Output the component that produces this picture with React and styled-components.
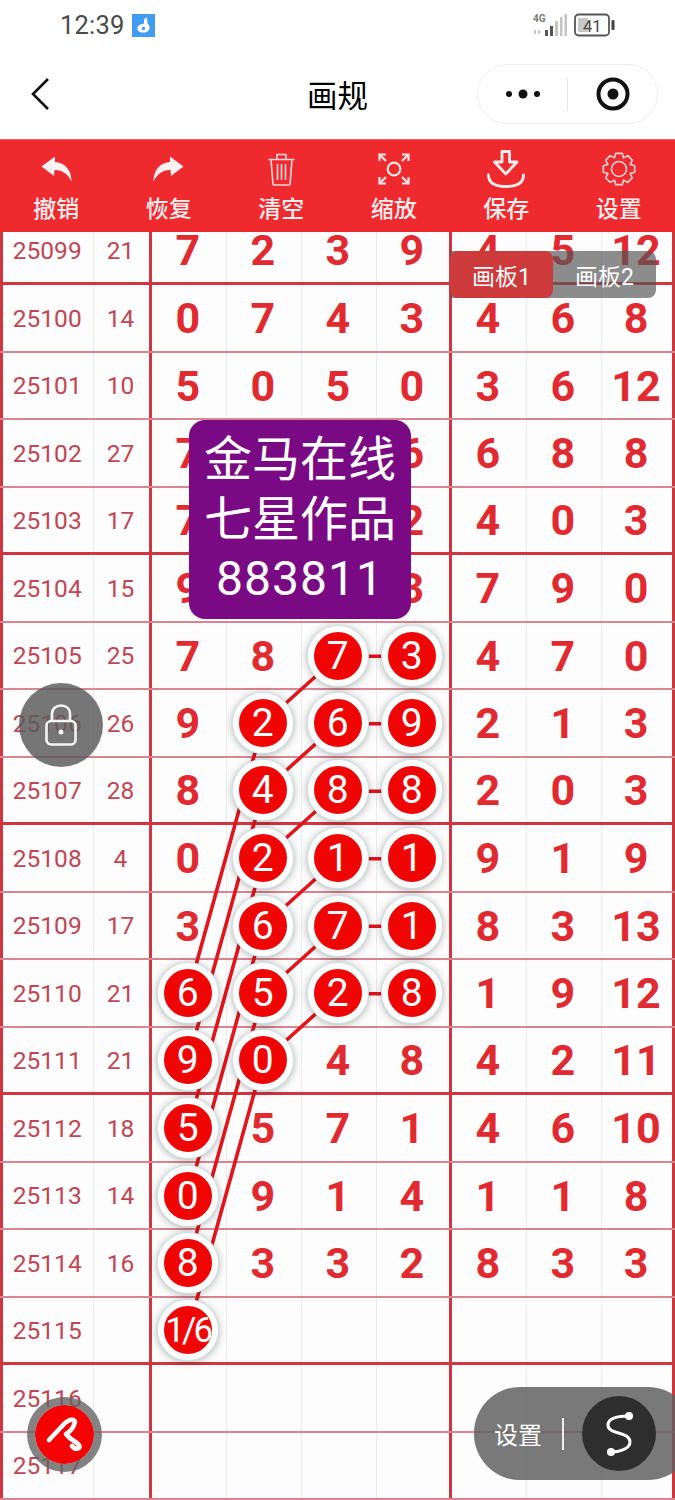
import React from "react";
import styled, { createGlobalStyle } from "styled-components";

const Global = createGlobalStyle`
  html, body { margin: 0; padding: 0; background: #fff; }
  * { box-sizing: border-box; }
  body { font-family: Roboto, "Noto Sans CJK SC", sans-serif; }
`;

const Page = styled.div`
  width: 675px; height: 1500px; overflow: hidden; position: relative;
  display: flex; flex-direction: column; background: #fff;
`;
const StatusBar = styled.div`
  height: 50px; display: flex; align-items: center; justify-content: space-between;
  padding: 0 60px 0 60px; flex: none;
`;
const StatusLeft = styled.div`display: flex; align-items: center; gap: 7px;`;
const Clock = styled.span`font-size: 25.5px; color: #4a4a4a; letter-spacing: .2px;`;
const StatusRight = styled.div`display: flex; align-items: center; gap: 7px;`;
const NavBar = styled.div`
  height: 89px; flex: none; position: relative; display: flex; align-items: center;
  justify-content: center;
`;
const BackBtn = styled.svg`position: absolute; left: 30px; top: 28px;`;
const Title = styled.div`font-size: 30.5px; color: #000; font-weight: 400; transform: translateY(-1px);`;
const Capsule = styled.div`
  position: absolute; left: 477px; top: 14px; width: 181px; height: 60px;
  border: 1px solid #efefef; border-radius: 30px; display: flex; align-items: center;
`;
const CapsuleHalf = styled.div`flex: 1; height: 100%; display: flex; align-items: center; justify-content: center;`;
const CapsuleDivider = styled.div`width: 1px; height: 34px; background: #e8e8e8;`;
const Toolbar = styled.div`
  height: 93px; flex: none; background: #ef2a2e; display: grid;
  grid-template-columns: repeat(6, 1fr); border-top: 1px solid #f65a5c;
`;
const Tool = styled.div`
  display: flex; flex-direction: column; align-items: center; color: #fdeeee; position: relative;
`;
const ToolIcon = styled.div`height: 42px; margin-top: 8px; display: flex; align-items: center; justify-content: center;`;
const ToolLabel = styled.div`font-size: 23px; font-weight: 500; line-height: 30px; margin-top: 5px;`;

const Board = styled.div`flex: 1; position: relative; overflow: hidden; background: #fdfdfd;`;
const Rows = styled.div`margin-top: -14.5px;`;
const Row = styled.div`
  height: 67.5px; display: grid;
  grid-template-columns: 94px 57.5px 75px 75px 75px 75px 75px 75px 73.5px;
  border-bottom: ${p => (p.$thick ? "3px solid #d1353f" : "2px solid #d9848f")};
`;
const Cell = styled.div`
  display: flex; align-items: center; justify-content: center; position: relative;
  border-right: ${p => (p.$heavy ? "3px solid #d1353f" : "1.5px solid #ebebeb")};
  border-left: ${p => (p.$first ? "3px solid #d1353f" : "none")};
  color: ${p => (p.$small ? "#c04653" : "#e12a30")};
  font-size: ${p => (p.$small ? "24.5px" : "43px")};
  font-weight: ${p => (p.$small ? 400 : 700)};
  padding: 1px 1.5px 0 0;
`;
const Ball = styled.div`
  position: relative; z-index: 3; flex: none; width: 60px; height: 60px; border-radius: 50%;
  background: #f00505; border: 6px solid #fff; color: #fff;
  font-size: ${p => (p.$tiny ? "35px" : "39px")};
  letter-spacing: ${p => (p.$tiny ? "-3px" : "0")};
  font-weight: 400;
  display: flex; align-items: center; justify-content: center; overflow: hidden;
  box-shadow: 0 0 0 1px #cfe3e6, 0 1px 8px rgba(0,0,0,.38);
`;
const Lines = styled.svg`position: absolute; left: 0; top: 0; z-index: 2; pointer-events: none;`;

const Tabs = styled.div`
  position: absolute; z-index: 5; left: 450px; top: 19px; display: flex; width: 206px; height: 47px;
  background: rgba(85,85,85,.68); border-radius: 0 8px 8px 0;
`;
const Tab = styled.div`
  width: 103px; display: flex; align-items: center; justify-content: center; font-size: 23px;
  color: #fff; border-radius: 8px; background: ${p => (p.$on ? "#cc3a3c" : "transparent")};
`;
const Popup = styled.div`
  position: absolute; z-index: 6; left: 189px; top: 188px; width: 222px; height: 199px;
  background: #7a0a84; border-radius: 16px; color: #fff; font-size: 48px; line-height: 59.5px;
  text-align: center; padding-top: 10px;
`;
const PopupCode = styled.span`letter-spacing: 1px;`;
const LockBtn = styled.div`
  position: absolute; z-index: 6; left: 19px; top: 451px; width: 84px; height: 84px; border-radius: 50%;
  background: rgba(92,92,92,.84); display: flex; align-items: center; justify-content: center;
`;
const PenBtn = styled.div`
  position: absolute; z-index: 6; left: 27px; top: 1165px; width: 75px; height: 75px; border-radius: 50%;
  background: #f50303; background-clip: padding-box; border: 8px solid rgba(100,100,100,.8);
  display: flex; align-items: center; justify-content: center;
`;
const Pill = styled.div`
  position: absolute; z-index: 6; left: 474px; top: 1155px; width: 220px; height: 93px;
  border-radius: 46px; background: rgba(95,95,95,.84); color: #fff;
  display: flex; align-items: center; padding-left: 20px;
`;
const PillText = styled.div`font-size: 24px;`;
const PillLine = styled.div`width: 1.5px; height: 32px; background: #eee; margin-left: 20px;`;
const PillKnob = styled.div`
  width: 74px; height: 75px; border-radius: 50%; background: #2e2e2e; margin-left: 18.5px;
  display: flex; align-items: center; justify-content: center;
`;

const COLS = [188, 263, 338, 413];
const ROW_H = 67.5;
const rowY = (n) => 53 + (n - 25100 + 0.5) * ROW_H;

const DATA = [
  [25099, "21", "7", "2", "3", "9", "4", "5", "12", []],
  [25100, "14", "0", "7", "4", "3", "4", "6", "8", []],
  [25101, "10", "5", "0", "5", "0", "3", "6", "12", []],
  [25102, "27", "7", "7", "7", "6", "6", "8", "8", []],
  [25103, "17", "7", "5", "3", "2", "4", "0", "3", []],
  [25104, "15", "9", "1", "2", "3", "7", "9", "0", []],
  [25105, "25", "7", "8", "7", "3", "4", "7", "0", [2, 3]],
  [25106, "26", "9", "2", "6", "9", "2", "1", "3", [1, 2, 3]],
  [25107, "28", "8", "4", "8", "8", "2", "0", "3", [1, 2, 3]],
  [25108, "4", "0", "2", "1", "1", "9", "1", "9", [1, 2, 3]],
  [25109, "17", "3", "6", "7", "1", "8", "3", "13", [1, 2, 3]],
  [25110, "21", "6", "5", "2", "8", "1", "9", "12", [0, 1, 2, 3]],
  [25111, "21", "9", "0", "4", "8", "4", "2", "11", [0, 1]],
  [25112, "18", "5", "5", "7", "1", "4", "6", "10", [0]],
  [25113, "14", "0", "9", "1", "4", "1", "1", "8", [0]],
  [25114, "16", "8", "3", "3", "2", "8", "3", "3", [0]],
  [25115, "", "1/6", "", "", "", "", "", "", [0]],
  [25116, "", "", "", "", "", "", "", "", []],
  [25117, "", "", "", "", "", "", "", "", []],
];

const CHAINS = [25105, 25106, 25107, 25108, 25109, 25110];

const Trail = () => (
  <Lines width="675" height="1268" fill="none" stroke="#e4141b" strokeWidth="3.6">
    {CHAINS.map((n) => (
      <g key={n}>
        <line x1={COLS[3]} y1={rowY(n)} x2={COLS[2]} y2={rowY(n)} />
        <line x1={COLS[2]} y1={rowY(n)} x2={COLS[1]} y2={rowY(n + 1)} />
        <line x1={COLS[1]} y1={rowY(n + 1)} x2={COLS[0]} y2={rowY(n + 5)} />
      </g>
    ))}
  </Lines>
);

const UndoIcon = ({ flip }) => (
  <svg width="31" height="26" viewBox="0 0 31 26" style={flip ? { transform: "scaleX(-1)" } : undefined}>
    <path d="M14 0.5 L0.5 10.5 L13 20 L13.5 14 C20 13.5 27 17.5 30.5 25.5 C30.5 14 24 6.5 14 6 Z" fill="#fdf1f1" />
  </svg>
);
const TrashIcon = () => (
  <svg width="27" height="33" viewBox="0 0 27 33" fill="none" stroke="#fbd8d8" strokeWidth="1.6">
    <path d="M0.5 6.5 H26.5 M9 6 V1.5 H18 V6" />
    <path d="M3 6.5 L5 31.5 C5 32 6 32 7 32 H20 C21 32 22 32 22 31.5 L24 6.5" />
    <path d="M9.5 11 V27 M13.5 11 V27 M17.5 11 V27" />
  </svg>
);
const ScanIcon = () => (
  <svg width="32" height="32" viewBox="0 0 32 32" fill="none" stroke="#fde4e4" strokeWidth="2.2">
    <circle cx="16" cy="16" r="6.3" />
    <path d="M1.5 8 V1.5 H8 M1.5 1.5 L8 8 M24 1.5 H30.5 V8 M30.5 1.5 L24 8 M1.5 24 V30.5 H8 M1.5 30.5 L8 24 M24 30.5 H30.5 V24 M30.5 30.5 L24 24" />
  </svg>
);
const SaveIcon = () => (
  <svg width="38" height="38" viewBox="0 0 38 38" fill="none" stroke="#fdeeee" strokeWidth="2.8" strokeLinejoin="round" strokeLinecap="round">
    <path d="M15 1.5 H22.5 V12 H30 L18.8 24 L7.5 12 H15 Z" />
    <path d="M1.5 25 C1.5 33 8 36.5 19 36.5 C30 36.5 36.5 33 36.5 25" />
  </svg>
);

const gearPath = (cx, cy, ro, ri, teeth) => {
  const step = (Math.PI * 2) / teeth;
  const pts = [];
  for (let i = 0; i < teeth; i += 1) {
    const a = i * step - Math.PI / 2;
    [[-0.5, ri], [-0.26, ro], [0.26, ro], [0.5, ri]].forEach(([t, r]) => {
      pts.push(`${(cx + r * Math.cos(a + t * step)).toFixed(2)} ${(cy + r * Math.sin(a + t * step)).toFixed(2)}`);
    });
  }
  return `M${pts.join(" L")} Z`;
};
const GearIcon = () => (
  <svg width="34" height="34" viewBox="0 0 34 34" fill="none" stroke="#fbd8d8" strokeWidth="1.6" strokeLinejoin="round">
    <path d={gearPath(17, 17, 16, 12, 8)} />
    <circle cx="17" cy="17" r="7.5" />
  </svg>
);

const TOOLS = [
  ["撤销", <UndoIcon />],
  ["恢复", <UndoIcon flip />],
  ["清空", <TrashIcon />],
  ["缩放", <ScanIcon />],
  ["保存", <SaveIcon />],
  ["设置", <GearIcon />],
];

export default function App() {
  return (
    <Page>
      <Global />
      <StatusBar>
        <StatusLeft>
          <Clock>12:39</Clock>
          <svg width="23" height="23" viewBox="0 0 23 23">
            <rect width="23" height="23" fill="#3f9cf0" />
            <path d="M5.5 13 C7 10.5 10 10 12 9.5 L12 5 L15 3.5 L15.5 9.5 C17.5 11 18 14 17 16 C15.5 19 9 19.5 6.5 17 C5.5 16 5 14.5 5.5 13 Z" fill="#fff" />
            <circle cx="11.5" cy="14.5" r="1.7" fill="#3f9cf0" />
          </svg>
        </StatusLeft>
        <StatusRight>
          <svg width="34" height="26" viewBox="0 0 34 26">
            <text x="0" y="10" fontSize="10" fontWeight="700" fill="#7a7a7a" fontFamily="Roboto, sans-serif">4G</text>
            <path d="M1 18h2v4H1z M5 18h2v4H5z" fill="#c8c8c8" />
            <path d="M12 18h3v6h-3z M17 14h3v10h-3z" fill="#555" />
            <path d="M22 9h3v15h-3z M27 5h2.5v19H27z M31.5 2H34v22h-2.5z" fill="#c4c4c4" />
          </svg>
          <svg width="41" height="24" viewBox="0 0 41 24">
            <rect x="1" y="1.5" width="34" height="21" rx="3.5" fill="#fff" stroke="#555" strokeWidth="1.8" />
            <rect x="4" y="5" width="10" height="14" fill="#c8c8c8" />
            <text x="9" y="18.5" fontSize="16.5" fill="#444" fontFamily="Roboto, sans-serif">41</text>
            <rect x="37.5" y="7" width="3" height="10" rx="1" fill="#444" />
          </svg>
        </StatusRight>
      </StatusBar>
      <NavBar>
        <BackBtn width="20" height="32" viewBox="0 0 20 32" fill="none" stroke="#111" strokeWidth="2.6">
          <path d="M18 1 L3 16 L18 31" />
        </BackBtn>
        <Title>画规</Title>
        <Capsule>
          <CapsuleHalf>
            <svg width="38" height="12" viewBox="0 0 38 12" fill="#111">
              <circle cx="5" cy="6" r="3" /><circle cx="19" cy="6" r="4.5" /><circle cx="33" cy="6" r="3" />
            </svg>
          </CapsuleHalf>
          <CapsuleDivider />
          <CapsuleHalf>
            <svg width="34" height="34" viewBox="0 0 34 34">
              <circle cx="17" cy="17" r="14.5" fill="none" stroke="#111" strokeWidth="4" />
              <circle cx="17" cy="17" r="5.5" fill="#111" />
            </svg>
          </CapsuleHalf>
        </Capsule>
      </NavBar>
      <Toolbar>
        {TOOLS.map(([label, icon]) => (
          <Tool key={label}>
            <ToolIcon>{icon}</ToolIcon>
            <ToolLabel>{label}</ToolLabel>
          </Tool>
        ))}
      </Toolbar>
      <Board>
        <Rows>
          {DATA.map(([num, sum, a, b, c, d, e, f, g, balls]) => (
            <Row key={num} $thick={num % 4 === 3}>
              <Cell $small $first>{num}</Cell>
              <Cell $small $heavy>{sum}</Cell>
              {[a, b, c, d].map((v, i) => (
                <Cell key={i} $heavy={i === 3}>
                  {balls.includes(i) ? <Ball $tiny={v.length > 1}>{v}</Ball> : v}
                </Cell>
              ))}
              <Cell>{e}</Cell>
              <Cell>{f}</Cell>
              <Cell $heavy>{g}</Cell>
            </Row>
          ))}
        </Rows>
        <Trail />
        <Tabs>
          <Tab $on>画板1</Tab>
          <Tab>画板2</Tab>
        </Tabs>
        <Popup>金马在线<br />七星作品<br /><PopupCode>883811</PopupCode></Popup>
        <LockBtn>
          <svg width="32" height="42" viewBox="0 0 32 42" fill="none" stroke="#f4f4f4" strokeWidth="2.6">
            <path d="M7 18 V10 C7 4.5 11 1.5 16 1.5 C21 1.5 25 4.5 25 10 V18" />
            <rect x="1.5" y="17" width="29" height="23.5" rx="4.5" />
            <circle cx="16" cy="28" r="2.5" fill="#f4f4f4" stroke="none" />
          </svg>
        </LockBtn>
        <PenBtn>
          <svg width="59" height="59" viewBox="0 0 59 59" fill="none" stroke="#fff" strokeWidth="4.6" strokeLinecap="round" strokeLinejoin="round">
            <path d="M14 35 L30 18 Q38 12 40 17 Q38 25 31 29 Q34 33 39 36 Q46 40 44 43 Q40 45 37 41" />
          </svg>
        </PenBtn>
        <Pill>
          <PillText>设置</PillText>
          <PillLine />
          <PillKnob>
            <svg width="30" height="46" viewBox="0 0 30 46" fill="none" stroke="#fff" strokeWidth="3" strokeLinecap="round">
              <path d="M25 5 C14 5 4 7 4 14 C4 24 26 20 26 31 C26 38 15 41 7 41" />
              <circle cx="25" cy="5" r="4" fill="#fff" stroke="none" />
              <circle cx="7" cy="41" r="4" fill="#fff" stroke="none" />
            </svg>
          </PillKnob>
        </Pill>
      </Board>
    </Page>
  );
}
